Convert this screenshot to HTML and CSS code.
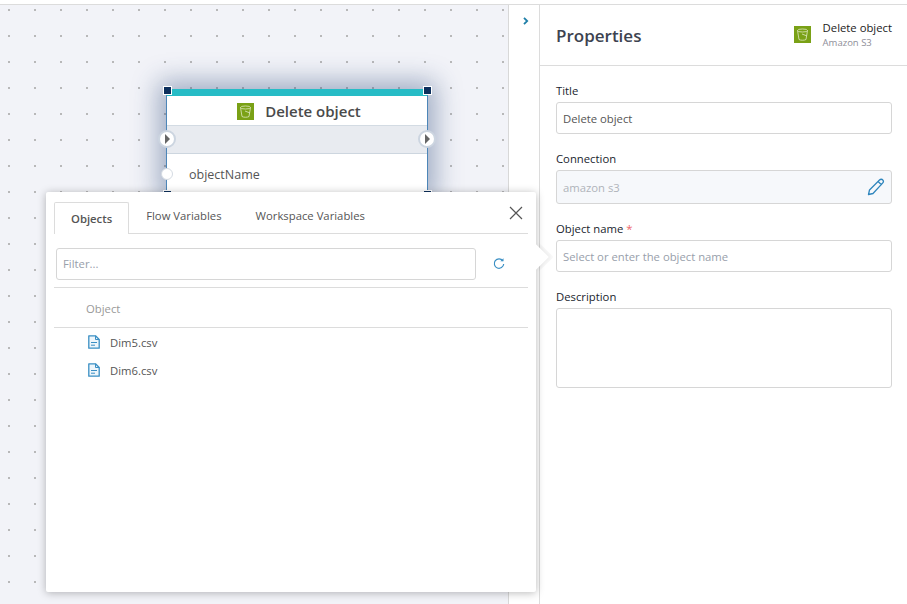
FILE: index.html
```html
<!DOCTYPE html>
<html lang="en">
<head>
  <meta charset="UTF-8">
  <title>Delete object - Properties</title>
  <link rel="stylesheet" href="styles.css">
</head>
<body>
  <div class="layout">
    <div class="canvas">
      <div class="node">
        <span class="handle handle-tl"></span>
        <span class="handle handle-tr"></span>
        <span class="handle handle-bl"></span>
        <span class="handle handle-br"></span>
        <div class="node-title">
          <svg class="s3-icon" width="17" height="17" viewBox="0 0 17 17">
            <rect width="17" height="17" fill="#7aa116"/>
            <path d="M3.500 4.500 5 13.500c1.500 1 5.500 1 7 0l1.500-9" fill="none" stroke="#dfe8c0" stroke-opacity="0.8"/>
            <ellipse cx="8.500" cy="4.500" rx="5" ry="1.500" fill="none" stroke="#dfe8c0" stroke-opacity="0.8"/>
            <path d="M8 8l5 2" stroke="#dfe8c0" stroke-opacity="0.8"/>
          </svg>
          <span>Delete object</span>
        </div>
        <div class="node-flow">
          <span class="port port-in"></span>
          <span class="port port-out"></span>
        </div>
        <div class="node-param">
          <span class="dot"></span>
          objectName
        </div>
      </div>

      <div class="popover">
        <div class="tabs">
          <div class="tab active">Objects</div>
          <div class="tab">Flow Variables</div>
          <div class="tab">Workspace Variables</div>
          <svg class="close" width="14" height="14" viewBox="0 0 14 14">
            <path d="M1 1l12 12M13 1 1 13" stroke="#555" stroke-width="1.200" fill="none"/>
          </svg>
        </div>
        <div class="filter-row">
          <input class="field filter" type="text" placeholder="Filter...">
          <svg class="refresh" width="12" height="12" viewBox="0 0 12 12">
            <path d="M9.800 2.800A4.700 4.700 0 1 0 10.700 6" fill="none" stroke="#3a8fc4" stroke-width="1.200"/>
            <path d="M7.300 3.300h3.200V0.300z" fill="#3a8fc4"/>
          </svg>
        </div>
        <div class="list-head">Object</div>
        <ul class="files">
          <li>
            <svg width="12" height="14" viewBox="0 0 12 14">
              <path d="M.8.8h6.700l3.700 3.700v8.700H.8z" fill="#eef6fb" stroke="#3a8fc4" stroke-width="1.300" stroke-linejoin="round"/>
              <path d="M7.500.8v3.700h3.700M3 7.500h6M3 10.200h4" fill="none" stroke="#3a8fc4"/>
            </svg>
            Dim5.csv
          </li>
          <li>
            <svg width="12" height="14" viewBox="0 0 12 14">
              <path d="M.8.8h6.700l3.700 3.700v8.700H.8z" fill="#eef6fb" stroke="#3a8fc4" stroke-width="1.300" stroke-linejoin="round"/>
              <path d="M7.500.8v3.700h3.700M3 7.500h6M3 10.200h4" fill="none" stroke="#3a8fc4"/>
            </svg>
            Dim6.csv
          </li>
        </ul>
        <span class="arrow"></span>
      </div>
    </div>

    <div class="strip">
      <svg width="6" height="8" viewBox="0 0 6 8">
        <path d="M1 .8 4.200 4 1 7.200" fill="none" stroke="#1f7fa8" stroke-width="1.800"/>
      </svg>
    </div>

    <div class="panel">
      <div class="panel-head">
        <h2>Properties</h2>
        <svg class="s3-small" width="17" height="17" viewBox="0 0 17 17">
          <rect width="17" height="17" fill="#7aa116"/>
          <path d="M3.500 4.500 5 13.500c1.500 1 5.500 1 7 0l1.500-9" fill="none" stroke="#dfe8c0" stroke-opacity="0.8"/>
          <ellipse cx="8.500" cy="4.500" rx="5" ry="1.500" fill="none" stroke="#dfe8c0" stroke-opacity="0.8"/>
          <path d="M8 8l5 2" stroke="#dfe8c0" stroke-opacity="0.8"/>
        </svg>
        <div class="head-meta">
          <div class="head-name">Delete object</div>
          <div class="head-sub">Amazon S3</div>
        </div>
      </div>
      <form class="props">
        <label>Title</label>
        <input class="field" type="text" value="Delete object">

        <label>Connection</label>
        <div class="field field-ro">
          <span>amazon s3</span>
          <svg width="18" height="18" viewBox="0 0 18 18">
            <path d="M1.500 16.500l1-4.500L12.500 2c1-1 2.500-1 3.300 0 .8.900.7 2.200-.2 3.100L6 15.500zM11 3.500l3.800 3.500" fill="none" stroke="#2f86bd" stroke-width="1.300" stroke-linejoin="round"/>
          </svg>
        </div>

        <label>Object name <span class="req">*</span></label>
        <input class="field" type="text" placeholder="Select or enter the object name">

        <label>Description</label>
        <textarea class="field area"></textarea>
      </form>
    </div>
  </div>
</body>
</html>
```

FILE: styles.css
```css
* {
  box-sizing: border-box;
}

html, body {
  height: 100%;
}

body {
  margin: 0;
  overflow: hidden;
  padding-top: 4px;
  background-color: #fff;
  color: #444;
  font-family: "Open Sans", "Noto Sans", sans-serif;
  font-size: 11.300px;
}

.layout {
  display: flex;
  height: 600px;
  border-top: 1px solid #dcdcdc;
}

/* canvas */
.canvas {
  position: relative;
  width: 509px;
  flex: none;
  border-right: 1px solid #d8d8d8;
  background-color: #f2f3f8;
  background-image: radial-gradient(circle, #a8a8a8 0.6px, transparent 1.1px);
  background-size: 26px 26px;
  background-position: -4px -8px;
}

.node {
  position: absolute;
  left: 166px;
  top: 84px;
  width: 262px;
  height: 106px;
  background-color: #fff;
  border: 1px solid #4d86b8;
  border-top: 7px solid #27bcc6;
  box-shadow: 0 0 24px 8px rgba(40, 70, 120, 0.4);
}

.handle {
  position: absolute;
  width: 9px;
  height: 9px;
  background-color: #0c2f5c;
  border: 1px solid #fff;
}

.handle-tl { left: -4px; top: -10px; }
.handle-tr { right: -5px; top: -10px; }
.handle-bl { left: -4px; bottom: -5px; }
.handle-br { right: -5px; bottom: -5px; }

.node-title {
  display: flex;
  align-items: center;
  justify-content: center;
  gap: 11px;
  height: 29px;
  padding: 1px 0 0 4px;
  color: #4a4a4a;
  font-size: 15px;
  font-weight: 600;
}

.node-flow {
  position: relative;
  height: 29px;
  background-color: #e8ebf0;
  border-top: 1px solid #d3dbe3;
  border-bottom: 1px solid #cdd6df;
}

.port {
  position: absolute;
  top: 4px;
  width: 18px;
  height: 18px;
  border-radius: 50%;
  background-color: #fff;
  border: 2px solid #ccd5e0;
}

.port::after {
  content: "";
  position: absolute;
  left: 5px;
  top: 2px;
  border-left: 5px solid #666;
  border-top: 5px solid transparent;
  border-bottom: 5px solid transparent;
}

.port-in { left: -9px; }
.port-out { right: -9px; }

.node-param {
  position: relative;
  padding: 12px 0 0 22px;
  color: #555;
  font-size: 12.500px;
}

.dot {
  position: absolute;
  left: -6px;
  top: 14px;
  width: 12px;
  height: 12px;
  border-radius: 50%;
  background-color: #fff;
  border: 1px solid #d5dbe3;
}

/* popover */
.popover {
  position: absolute;
  left: 46px;
  top: 187px;
  width: 490px;
  height: 400px;
  padding: 0 8px;
  background-color: #fff;
  border-radius: 2px;
  box-shadow: 0 1px 8px rgba(0, 0, 0, 0.28);
}

.arrow {
  position: absolute;
  right: -9px;
  top: 56px;
  width: 18px;
  height: 18px;
  background-color: #fff;
  transform: rotate(45deg);
  box-shadow: 3px -3px 5px rgba(0, 0, 0, 0.07);
  clip-path: polygon(-20% -20%, 120% -20%, 120% 120%);
}

.tabs {
  position: relative;
  display: flex;
  height: 42px;
  padding-top: 10px;
  border-bottom: 1px solid #dcdcdc;
}

.tab {
  padding: 6px 17px 0;
  color: #555;
}

.tab.active {
  height: 32px;
  padding: 8px 16px 0;
  background-color: #fff;
  border: 1px solid #dcdcdc;
  border-bottom: 0;
  border-radius: 2px 2px 0 0;
  font-weight: 600;
}

.close {
  position: absolute;
  right: 5px;
  top: 14px;
}

.filter-row {
  display: flex;
  align-items: center;
  height: 54px;
  padding: 6px 0 0 2px;
  border-bottom: 1px solid #dcdcdc;
}

.filter-row .filter {
  width: 420px;
  height: 32px;
  margin: 0;
}

.refresh {
  margin-left: 17px;
}

.list-head {
  height: 40px;
  padding: 13px 0 0 32px;
  border-bottom: 1px solid #dcdcdc;
  color: #999;
}

.files {
  list-style: none;
  margin: 0;
  padding: 0 0 0 34px;
}

.files li {
  display: flex;
  align-items: center;
  gap: 10px;
  height: 28px;
  color: #555;
}

/* side strip */
.strip {
  width: 31px;
  flex: none;
  padding: 12px 0 0 14px;
  border-right: 1px solid #dcdcdc;
}

.strip svg {
  display: block;
}

/* properties */
.panel {
  flex: 1;
  min-width: 0;
}

.panel-head {
  display: flex;
  align-items: center;
  height: 61px;
  padding: 0 15px 0 16px;
  border-bottom: 1px solid #dcdcdc;
}

.panel-head h2 {
  flex: 1;
  margin: 0;
  color: #3d4350;
  font-size: 17px;
  font-weight: 600;
}

.s3-small {
  margin: 0 12px 2px 0;
}

.head-name {
  color: #222;
  line-height: 15px;
}

.head-sub {
  color: #8e8e98;
  font-size: 9.500px;
  line-height: 15px;
}

.props {
  padding: 16px 15px 0 16px;
}

.props label {
  display: block;
  height: 20px;
  color: #20252e;
  line-height: 18px;
}

.req {
  color: #e66;
}

.field {
  display: block;
  width: 336px;
  height: 32px;
  margin-bottom: 16px;
  padding: 0 6px;
  background-color: #fff;
  border: 1px solid #d6d6d6;
  border-radius: 3px;
  color: #555;
  font-family: inherit;
  font-size: 11.300px;
  outline: none;
}

.field::placeholder {
  color: #98a0ab;
  opacity: 1;
}

.field-ro {
  display: flex;
  align-items: center;
  justify-content: space-between;
  height: 34px;
  margin-bottom: 16px;
  background-color: #f6f8fb;
  color: #b0b4ba;
}

.area {
  height: 80px;
  resize: none;
}
```
